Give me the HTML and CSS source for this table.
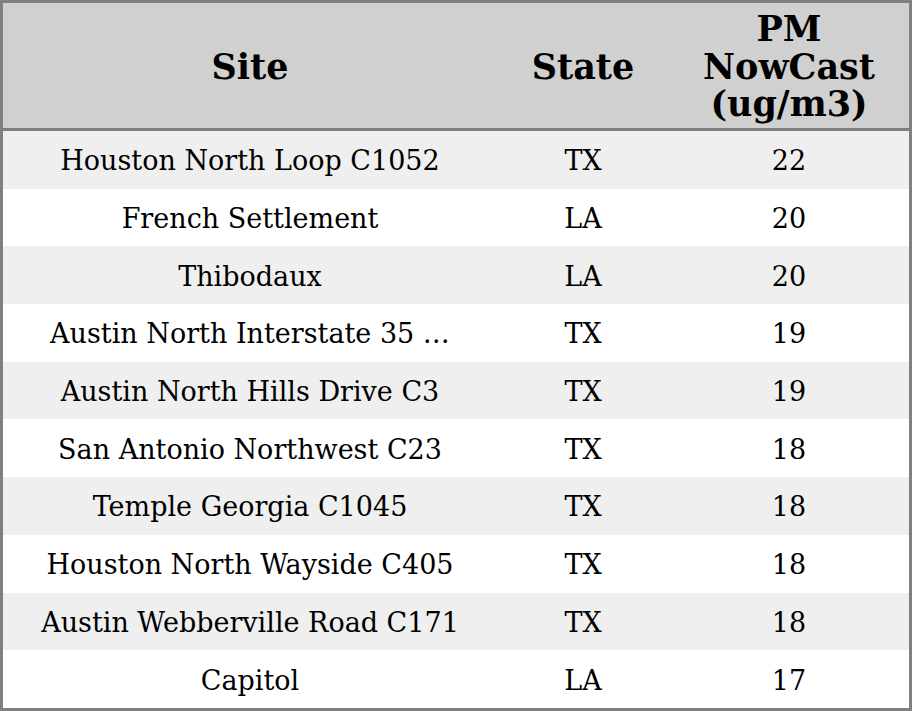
FILE: index.html
```html
<!DOCTYPE html>
<html>
<head>
<meta charset="utf-8">
<link rel="stylesheet" href="styles.css">
</head>
<body>
<div class="table">
  <div class="row head">
    <div class="cell">Site</div>
    <div class="cell">State</div>
    <div class="cell">PM<br>NowCast<br>(ug/m3)</div>
  </div>
  <div class="row odd"><div class="cell">Houston North Loop C1052</div><div class="cell">TX</div><div class="cell">22</div></div>
  <div class="row"><div class="cell">French Settlement</div><div class="cell">LA</div><div class="cell">20</div></div>
  <div class="row odd"><div class="cell">Thibodaux</div><div class="cell">LA</div><div class="cell">20</div></div>
  <div class="row"><div class="cell">Austin North Interstate 35 …</div><div class="cell">TX</div><div class="cell">19</div></div>
  <div class="row odd"><div class="cell">Austin North Hills Drive C3</div><div class="cell">TX</div><div class="cell">19</div></div>
  <div class="row"><div class="cell">San Antonio Northwest C23</div><div class="cell">TX</div><div class="cell">18</div></div>
  <div class="row odd"><div class="cell">Temple Georgia C1045</div><div class="cell">TX</div><div class="cell">18</div></div>
  <div class="row"><div class="cell">Houston North Wayside C405</div><div class="cell">TX</div><div class="cell">18</div></div>
  <div class="row odd"><div class="cell">Austin Webberville Road C171</div><div class="cell">TX</div><div class="cell">18</div></div>
  <div class="row"><div class="cell">Capitol</div><div class="cell">LA</div><div class="cell">17</div></div>
</div>
</body>
</html>
```
FILE: styles.css
```css
html, body { margin: 0; padding: 0; background: #fff; }
.table {
  width: 912px;
  height: 711px;
  box-sizing: border-box;
  border: 3px solid #808080;
  font-family: "DejaVu Serif", serif;
  font-size: 27px;
  color: #000;
  display: flex;
  flex-direction: column;
}
.row {
  display: grid;
  grid-template-columns: 494px 172px 240px;
  height: 57.7px;
  background: #fff;
}
.row.odd { background: #efefef; }
.row.head {
  height: 125px;
  flex: none;
  background: #d0d0d0;
  border-bottom: 3px solid #808080;
  font-weight: bold;
  font-size: 35px;
  line-height: 37.5px;
}
.cell {
  display: flex;
  align-items: center;
  justify-content: center;
  text-align: center;
  white-space: nowrap;
  padding-top: 2px;
}
```
